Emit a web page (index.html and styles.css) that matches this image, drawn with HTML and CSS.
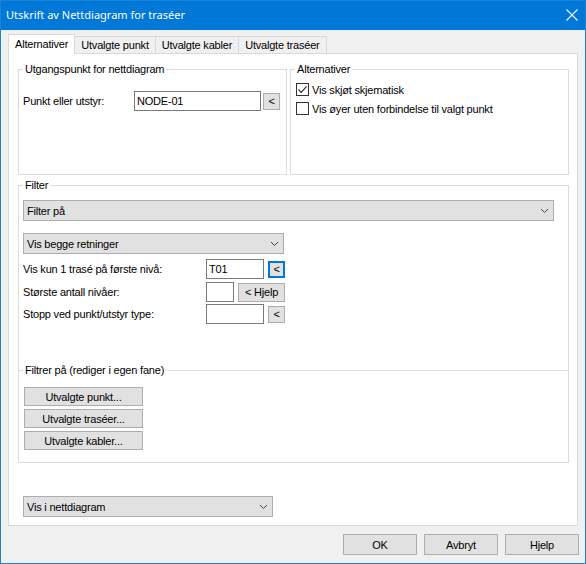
FILE: index.html
```html
<!DOCTYPE html>
<html lang="no">
<head>
<meta charset="utf-8">
<title>Utskrift av Nettdiagram for traséer</title>
<link rel="stylesheet" href="styles.css">
</head>
<body>
<div class="window">
  <div class="titlebar">
    <span class="title">Utskrift av Nettdiagram for traséer</span>
    <svg class="close" width="12" height="12" viewBox="0 0 12 12"><path d="M0.5 0.5 L11.5 11.5 M11.5 0.5 L0.5 11.5" stroke="#fff" stroke-width="1.1" fill="none"/></svg>
  </div>

  <div class="tabs">
    <div class="tab selected">Alternativer</div>
    <div class="tab">Utvalgte punkt</div>
    <div class="tab">Utvalgte kabler</div>
    <div class="tab">Utvalgte traséer</div>
  </div>

  <div class="tabpage">
    <div class="toprow">
      <fieldset class="group g-start">
        <legend>Utgangspunkt for nettdiagram</legend>
        <div class="start-row">
          <span class="label">Punkt eller utstyr:</span>
          <div class="textbox tb-node">NODE-01</div>
          <div class="btn btn-small">&lt;</div>
        </div>
      </fieldset>
      <fieldset class="group g-alt">
        <legend>Alternativer</legend>
        <label class="check-row">
          <span class="checkbox"><svg width="11" height="11" viewBox="0 0 11 11"><path d="M1.5 5.5 L4.2 8.3 L9.6 2.3" stroke="#333" stroke-width="1.2" fill="none"/></svg></span>
          <span>Vis skjøt skjematisk</span>
        </label>
        <label class="check-row">
          <span class="checkbox"></span>
          <span>Vis øyer uten forbindelse til valgt punkt</span>
        </label>
      </fieldset>
    </div>

    <fieldset class="group g-filter">
      <legend>Filter</legend>
      <div class="filter-inner">
        <div class="combo combo-filter">
          <span>Filter på</span>
          <svg class="chev" width="7" height="4" viewBox="0 0 7 4"><path d="M0 0 L3.5 3.5 L7 0" stroke="#444" stroke-width="1" fill="none"/></svg>
        </div>
        <div class="combo combo-dir">
          <span>Vis begge retninger</span>
          <svg class="chev" width="7" height="4" viewBox="0 0 7 4"><path d="M0 0 L3.5 3.5 L7 0" stroke="#444" stroke-width="1" fill="none"/></svg>
        </div>
        <div class="frow r1">
          <span class="label">Vis kun 1 trasé på første nivå:</span>
          <div class="textbox tb-mid">T01</div>
          <div class="btn btn-small focused">&lt;</div>
        </div>
        <div class="frow r2">
          <span class="label">Største antall nivåer:</span>
          <div class="textbox tb-short"></div>
          <div class="btn btn-hjelp">&lt; Hjelp</div>
        </div>
        <div class="frow r3">
          <span class="label">Stopp ved punkt/utstyr type:</span>
          <div class="textbox tb-mid"></div>
          <div class="btn btn-small">&lt;</div>
        </div>
      </div>
      <fieldset class="subgroup">
        <legend>Filtrer på (rediger i egen fane)</legend>
        <div class="sel-buttons">
          <div class="btn btn-sel">Utvalgte punkt...</div>
          <div class="btn btn-sel">Utvalgte traséer...</div>
          <div class="btn btn-sel">Utvalgte kabler...</div>
        </div>
      </fieldset>
    </fieldset>

    <div class="combo combo-view">
      <span>Vis i nettdiagram</span>
      <svg class="chev" width="7" height="4" viewBox="0 0 7 4"><path d="M0 0 L3.5 3.5 L7 0" stroke="#444" stroke-width="1" fill="none"/></svg>
    </div>
  </div>

  <div class="dialog-buttons">
    <div class="btn btn-dlg">OK</div>
    <div class="btn btn-dlg">Avbryt</div>
    <div class="btn btn-dlg">Hjelp</div>
  </div>
</div>
</body>
</html>
```

FILE: styles.css
```css
* { box-sizing: border-box; }

html, body {
  margin: 0;
  padding: 0;
  background: #f0f0f0;
}

body {
  font-family: "Liberation Sans", Arial, sans-serif;
  font-size: 11px;
  letter-spacing: -0.2px;
  color: #000;
}

.window {
  width: 586px;
  height: 564px;
  border: 1px solid #1a83d6;
  background: #f0f0f0;
  display: flex;
  flex-direction: column;
}

.titlebar {
  height: 29px;
  background: #0078d7;
  color: #fff;
  display: flex;
  align-items: center;
  justify-content: space-between;
  padding: 0 7px 0 5px;
  flex: none;
}

.title {
  font-family: "Noto Sans", "Open Sans", sans-serif;
  font-size: 11px;
  letter-spacing: 0;
  padding-bottom: 2px;
}

.close { display: block; margin-bottom: 1px; }

/* Tabs */
.tabs {
  display: flex;
  align-items: flex-end;
  height: 19px;
  margin: 4px 0 0 7px;
  flex: none;
  position: relative;
  z-index: 1;
}

.tab {
  height: 17px;
  padding: 0 6px;
  border: 1px solid #d9d9d9;
  border-bottom: none;
  background: #f0f0f0;
  line-height: 16px;
  white-space: nowrap;
}

.tab + .tab { margin-left: -1px; }

.tab.selected {
  height: 20px;
  margin-bottom: -1px;
  background: #fff;
  padding: 0 6px;
  line-height: 18px;
}

.tab.selected + .tab { margin-left: 0; border-left: none; }

.tabpage {
  width: 570px;
  height: 473px;
  margin-left: 7px;
  border: 1px solid #d9d9d9;
  background: #fff;
  flex: none;
  padding: 9px 8px 0 9px;
}

/* Group boxes */
fieldset.group {
  margin: 0;
  padding: 0;
  border: 1px solid #dcdcdc;
  min-width: 0;
}

fieldset legend {
  padding: 0 2px;
  margin-left: 4px;
  line-height: 13px;
}

.toprow {
  display: flex;
  gap: 3px;
}

.g-start { width: 269px; height: 112px; }
.g-alt { width: 279px; height: 112px; }

.start-row {
  display: flex;
  align-items: center;
  padding-left: 4px;
  margin-top: 15px;
}

.start-row .label { width: 111px; }

.tb-node { width: 127px; }
.start-row .btn-small { margin-left: 2px; }

.check-row {
  display: flex;
  align-items: center;
  gap: 3px;
  padding-left: 5px;
  height: 13px;
  margin-top: 7px;
}
.check-row + .check-row { margin-top: 6px; }

.checkbox {
  width: 13px;
  height: 13px;
  border: 1px solid #333;
  background: #fff;
  display: flex;
  align-items: center;
  justify-content: center;
  flex: none;
}

/* Controls */
.textbox {
  height: 20px;
  border: 1px solid #7a7a7a;
  background: #fff;
  padding: 0 2px;
  line-height: 18px;
  flex: none;
}

.btn {
  background: #e1e1e1;
  border: 1px solid #adadad;
  display: flex;
  align-items: center;
  justify-content: center;
  flex: none;
  white-space: nowrap;
}

.btn-small {
  width: 17px;
  height: 17px;
}

.btn.focused {
  border: 2px solid #0078d7;
}

.combo {
  height: 21px;
  background: #e1e1e1;
  border: 1px solid #adadad;
  display: flex;
  align-items: center;
  justify-content: space-between;
  padding: 0 5px 0 3px;
}

.chev { display: block; }

/* Filter */
fieldset.g-filter {
  width: 551px;
  height: 284px;
  margin-top: 4px;
}

.filter-inner { padding: 0 4px; }

.combo-filter { width: 531px; margin-top: 8px; }
.combo-dir { width: 261px; margin-top: 12px; }

.frow {
  display: flex;
  align-items: center;
  height: 20px;
}
.frow .label { width: 183px; }
.frow .btn { margin-left: 4px; }
.r1 { margin-top: 5px; }
.r2 { margin-top: 3px; }
.r3 { margin-top: 2px; }

.tb-mid { width: 58px; }
.tb-short { width: 28px; }
.btn-hjelp { width: 47px; height: 19px; }

fieldset.subgroup {
  margin: 40px 0 0 0;
  padding: 0;
  border: none;
  border-top: 1px solid #dcdcdc;
  min-width: 0;
}

.sel-buttons {
  display: flex;
  flex-direction: column;
  gap: 3px;
  padding: 10px 0 0 5px;
}

.btn-sel { width: 119px; height: 19px; }

.combo-view {
  width: 250px;
  margin: 33px 0 0 5px;
}

/* Dialog buttons */
.dialog-buttons {
  display: flex;
  justify-content: flex-end;
  gap: 7px;
  margin-top: 8px;
  padding-right: 6px;
}

.btn-dlg { width: 74px; height: 21px; }
```
